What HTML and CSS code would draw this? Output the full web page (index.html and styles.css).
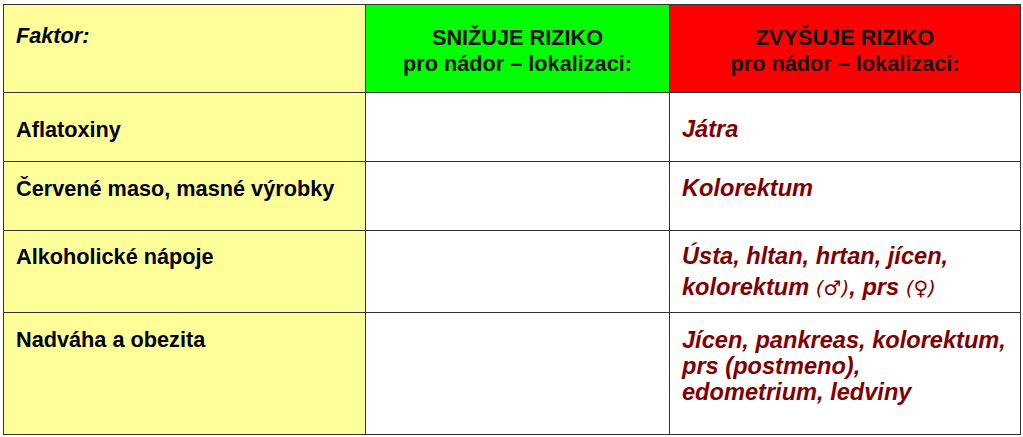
FILE: index.html
```html
<!DOCTYPE html>
<html lang="cs">
<head>
<meta charset="utf-8">
<title>Faktory rizika</title>
<link rel="stylesheet" href="styles.css">
</head>
<body>
<table class="risk">
  <colgroup>
    <col class="c-factor">
    <col class="c-low">
    <col class="c-high">
  </colgroup>
  <tr class="row-head">
    <th class="factor head-factor">Faktor:</th>
    <th class="head-low">SNIŽUJE RIZIKO<br>pro nádor – lokalizaci:</th>
    <th class="head-high">ZVYŠUJE RIZIKO<br>pro nádor – lokalizaci:</th>
  </tr>
  <tr class="row-1">
    <td class="factor">Aflatoxiny</td>
    <td class="low"></td>
    <td class="high">Játra</td>
  </tr>
  <tr class="row-2">
    <td class="factor">Červené maso, masné výrobky</td>
    <td class="low"></td>
    <td class="high">Kolorektum</td>
  </tr>
  <tr class="row-3">
    <td class="factor">Alkoholické nápoje</td>
    <td class="low"></td>
    <td class="high">Ústa, hltan, hrtan, jícen,<br>kolorektum <span class="sym">(♂)</span>, prs <span class="sym">(♀)</span></td>
  </tr>
  <tr class="row-4">
    <td class="factor">Nadváha a obezita</td>
    <td class="low"></td>
    <td class="high">Jícen, pankreas, kolorektum,<br>prs (postmeno),<br>edometrium, ledviny</td>
  </tr>
</table>
</body>
</html>
```
FILE: styles.css
```css
html, body {
  margin: 0;
  padding: 0;
  background: #ffffff;
}
body {
  padding: 4px 0 0 3px;
  font-family: "Liberation Sans", Arial, sans-serif;
}
.risk {
  border-collapse: collapse;
  table-layout: fixed;
  width: 1017px;
}
.c-factor { width: 362px; }
.c-low { width: 304px; }
.c-high { width: 351px; }

.risk th,
.risk td {
  border: 1px solid #333333;
  vertical-align: top;
  padding: 0;
  line-height: 25px;
}
.factor {
  background: #ffff99;
  color: #000000;
  font-weight: bold;
  font-size: 21.7px;
  text-align: left;
  padding-left: 12px !important;
}
.head-factor {
  font-style: italic;
  padding-top: 18px !important;
}
.head-low,
.head-high {
  font-size: 21.7px;
  font-weight: bold;
  color: #111111;
  text-align: center;
  padding-top: 20px !important;
  line-height: 26px !important;
}
.head-low { background: #00ff00; }
.head-high { background: #ff0000; }
.low { background: #ffffff; }
.high {
  background: #ffffff;
  color: #800000;
  font-weight: bold;
  font-style: italic;
  font-size: 23.6px;
  padding-left: 12px !important;
}
.sym {
  font-weight: normal;
  font-family: "DejaVu Sans", sans-serif;
  font-size: 20px;
}
.row-head { height: 88px; }
.row-1 { height: 69px; }
.row-2 { height: 69px; }
.row-3 { height: 82px; }
.row-4 { height: 122px; }

.row-1 td { padding-top: 24px; }
.row-2 td { padding-top: 14px; }
.row-3 td { padding-top: 13px; }
.row-3 .high { line-height: 31px; padding-top: 10px; }
.row-4 td { padding-top: 14px; }
.row-4 .high { line-height: 26px; }
```
